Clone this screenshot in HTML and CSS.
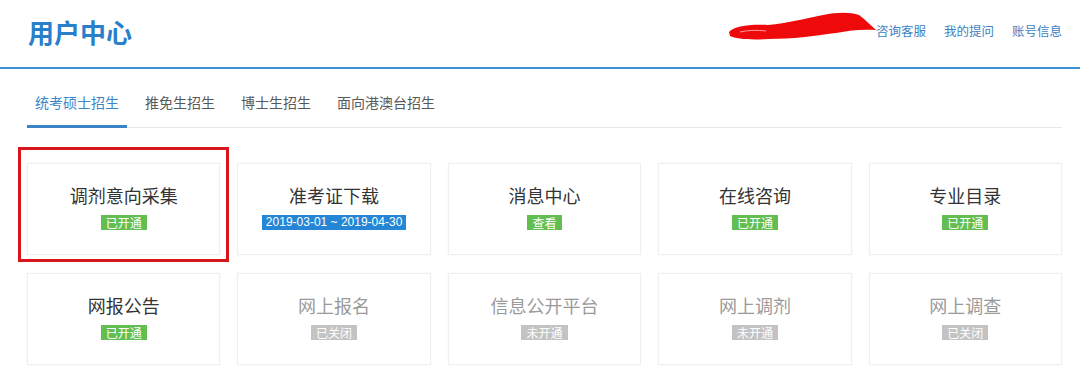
FILE: index.html
```html
<html>

<head>
	<meta charset="utf-8">
	<link rel="stylesheet" href="styles.css">
</head>

<body>
	<div id="header">
		<div id="site-title">用户中心</div>
		<div id="header-links">
			<svg id="scribble" width="160" height="34" viewBox="725 10 160 34">
				<path d="M731 33 C736 27 752 25 770 26 C790 24 805 20 825 16 C840 13 852 13 861 16 L866 20 L878 31 C866 30 852 31 838 34 C815 37 795 40 770 40 C752 41 738 40 732 37 Z" fill="#ee0a0a" />
				<path d="M742 33 C750 31 760 31 768 32" stroke="#ff9a9a" stroke-width="1" fill="none" />
			</svg>
			<a class="header-link">咨询客服</a>
			<a class="header-link">我的提问</a>
			<a class="header-link">账号信息</a>
		</div>
	</div>

	<div id="main">
		<div id="tabs">
			<div class="tab active">统考硕士招生</div>
			<div class="tab">推免生招生</div>
			<div class="tab">博士生招生</div>
			<div class="tab">面向港澳台招生</div>
		</div>

		<div id="cards">
			<div id="highlight"></div>
			<div class="card">
				<div class="card-title">调剂意向采集</div>
				<span class="badge open">已开通</span>
			</div>
			<div class="card">
				<div class="card-title">准考证下载</div>
				<span class="badge date">2019-03-01 ~ 2019-04-30</span>
			</div>
			<div class="card">
				<div class="card-title">消息中心</div>
				<span class="badge open">查看</span>
			</div>
			<div class="card">
				<div class="card-title">在线咨询</div>
				<span class="badge open">已开通</span>
			</div>
			<div class="card">
				<div class="card-title">专业目录</div>
				<span class="badge open">已开通</span>
			</div>
			<div class="card">
				<div class="card-title">网报公告</div>
				<span class="badge open">已开通</span>
			</div>
			<div class="card disabled">
				<div class="card-title">网上报名</div>
				<span class="badge closed">已关闭</span>
			</div>
			<div class="card disabled">
				<div class="card-title">信息公开平台</div>
				<span class="badge closed">未开通</span>
			</div>
			<div class="card disabled">
				<div class="card-title">网上调剂</div>
				<span class="badge closed">未开通</span>
			</div>
			<div class="card disabled">
				<div class="card-title">网上调查</div>
				<span class="badge closed">已关闭</span>
			</div>
		</div>
	</div>
</body>

</html>
```

FILE: styles.css
```css
body {
	margin: 0;
	background: #fff;
	font-family: "Noto Sans CJK SC", "Liberation Sans", sans-serif;
	color: #333;
}

#header {
	display: flex;
	justify-content: space-between;
	align-items: center;
	height: 67px;
	padding: 0 18px 0 28px;
	border-bottom: 2px solid #3b8fd5;
}

#site-title {
	font-size: 26px;
	font-weight: bold;
	color: #2a7fcb;
	line-height: 30px;
	margin-top: -4px;
}

#header-links {
	position: relative;
	display: flex;
	gap: 18px;
	margin-top: -6px;
}

.header-link {
	font-size: 12.5px;
	color: #3d7fbf;
	line-height: 18px;
	position: relative;
}

#scribble {
	position: absolute;
	left: -153px;
	top: -13px;
}

#main {
	width: 1035px;
	margin-left: 27px;
}

#tabs {
	display: flex;
	margin-top: 10px;
	border-bottom: 1px solid #e6e6e6;
}

.tab {
	font-size: 14px;
	color: #5a5a5a;
	line-height: 47px;
	padding: 0 8px;
	margin-right: 10px;
	margin-bottom: -1px;
	border-bottom: 2px solid transparent;
}

.tab.active {
	color: #3a86c8;
	border-bottom: 3px solid #3a83c4;
	line-height: 46px;
}

#cards {
	position: relative;
	display: grid;
	grid-template-columns: repeat(5, 1fr);
	column-gap: 17px;
	row-gap: 18px;
	margin-top: 35px;
}

#highlight {
	position: absolute;
	left: -9px;
	top: -16px;
	width: 205px;
	height: 109px;
	border: 3px solid #d9141b;
}

.card {
	height: 92px;
	border: 1px solid #efefef;
	box-shadow: 0 0 2px rgba(0, 0, 0, 0.04);
	display: flex;
	flex-direction: column;
	align-items: center;
	padding-top: 19px;
	box-sizing: border-box;
}

.card-title {
	font-size: 18px;
	line-height: 24px;
	color: #333;
	margin-bottom: 8px;
}

.card.disabled .card-title {
	color: #9a9a9a;
}

.badge {
	font-size: 12px;
	line-height: 15px;
	padding: 0 5px;
	color: #fff;
}

.badge.open {
	background: #62be50;
}

.badge.date {
	background: #2486d4;
	font-family: "Liberation Sans", sans-serif;
	padding: 0 4px;
}

.badge.closed {
	background: #c3c3c3;
}
```
